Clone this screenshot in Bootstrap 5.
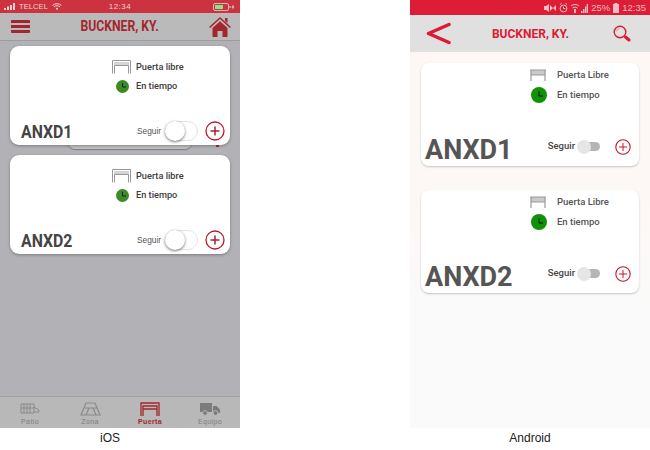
<!DOCTYPE html>
<html lang="en">

<head>
    <meta charset="UTF-8">
    <meta name="viewport" content="width=device-width, initial-scale=1.0">
    <title>Puerta</title>
    <link href="https://cdn.jsdelivr.net/npm/bootstrap@5.3.0/dist/css/bootstrap.min.css" rel="stylesheet">
    <style>
        body {
            width: 650px;
            height: 450px;
            overflow: hidden;
            background: #fff;
            font-family: "Liberation Sans", Arial, sans-serif;
        }

        .phone-col {
            width: 240px;
        }

        .phone {
            height: 428px;
        }

        .phone-ios {
            background: #b1b1b6;
        }

        .phone-android {
            background: linear-gradient(#fdf8f6, #fdf8f6 200px, #fafafa 320px);
        }

        .caption {
            height: 22px;
            font-size: 12px;
            line-height: 20px;
            color: #222;
        }

        .caption-ios {
            padding-right: 20px;
        }

        /* status bars */
        .status-ios {
            height: 13px;
            background: #cb333f;
            color: #ecd3d5;
            font-size: 7.5px;
            line-height: 13px;
            padding: 0 5px 0 4px;
            letter-spacing: .1px;
        }

        .status-android {
            height: 15px;
            background: #dd1d36;
            color: #f3bcc3;
            font-size: 9.5px;
            line-height: 15px;
            padding: 0 4px 0 0;
            gap: 3px;
        }

        .status-third {
            width: 33.33%;
        }

        .time-ios {
            font-size: 8px;
            letter-spacing: .5px;
            padding-left: 1px;
        }

        /* headers */
        .head-ios {
            height: 28px;
            background: #bababa;
            border-bottom: 1px solid #9d9d9f;
            padding: 0 9px 0 11px;
            color: #a3262f;
        }

        .head-android {
            height: 37px;
            background: #e0e0e0;
            padding: 0 19px 0 16px;
            color: #dc1a33;
        }

        .title-ios {
            font-family: "Roboto", sans-serif;
            font-weight: 700;
            font-size: 14.5px;
            transform: scaleX(.84);
        }

        .title-android {
            font-family: "Roboto", sans-serif;
            font-weight: 700;
            font-size: 12px;
            margin-left: -3px;
        }

        .burger {
            width: 19px;
            height: 13px;
            border-top: 3px solid #a3262f;
            border-bottom: 3px solid #a3262f;
            border-radius: 1px;
        }

        .burger::after {
            content: "";
            display: block;
            height: 3px;
            margin-top: 2px;
            background: #a3262f;
        }

        /* cards */
        .list-ios {
            padding: 5px 10px 0;
            gap: 10px;
            position: relative;
        }

        .list-android {
            padding: 11px 11px 0;
            gap: 24.500px;
        }

        .unit-card {
            background: #fff;
            position: relative;
            z-index: 1;
        }

        .unit-ios {
            height: 99px;
            border-radius: 9px;
            box-shadow: 0 1px 3px rgba(60, 60, 60, .45);
        }

        .unit-android {
            height: 102.500px;
            border-radius: 8px;
            box-shadow: 0 1px 2px rgba(0, 0, 0, .22);
        }

        .peek {
            position: absolute;
            top: 99px;
            left: 68px;
            width: 124px;
            height: 9px;
            background: #c0c0c2;
            border-radius: 0 0 7px 7px;
            box-shadow: 0 1px 1px rgba(60, 60, 60, .45);
        }

        .peek-dot {
            position: absolute;
            top: 104px;
            left: 216px;
            width: 3px;
            height: 2px;
            background: #a3262f;
        }

        .info-ios {
            padding: 13px 0 0 102px;
            gap: 3px;
        }

        .info-android {
            padding: 4px 0 0 109px;
            gap: 4px;
        }

        .info-row {
            height: 16px;
        }

        .info-ios .info-row {
            font-family: "Roboto", sans-serif;
            font-weight: 500;
            font-size: 9.200px;
            color: #3c3c3c;
        }

        .info-android .info-row {
            font-family: "Roboto", sans-serif;
            font-weight: 500;
            font-size: 9.500px;
            color: #555;
        }

        .icon-slot {
            width: 24px;
        }

        .icon-slot-a {
            width: 27px;
        }

        .foot-ios {
            position: absolute;
            left: 11px;
            right: 5px;
            bottom: 2px;
            height: 24px;
        }

        .foot-android {
            position: absolute;
            left: 4px;
            right: 8px;
            bottom: -1px;
            height: 34px;
        }

        .code-ios {
            font-family: "Roboto", sans-serif;
            font-weight: 700;
            font-size: 18px;
            color: #444;
            transform: scaleX(.88);
            transform-origin: left;
        }

        .code-android {
            font-family: "Roboto", sans-serif;
            font-weight: 700;
            font-size: 27px;
            line-height: 34px;
            color: #555;
        }

        .follow-ios {
            font-size: 8.300px;
            color: #555;
            margin-right: 4px;
        }

        .follow-android {
            font-family: "Roboto", sans-serif;
            font-weight: 500;
            font-size: 9.500px;
            color: #444;
        }

        .right-android {
            margin-bottom: 6px;
        }

        .toggle-ios {
            width: 33px;
            height: 20px;
            border: 1px solid #e2e2e2;
            border-radius: 10px;
            position: relative;
            margin-right: 7px;
        }

        .toggle-ios::before {
            content: "";
            position: absolute;
            left: -1px;
            top: -1px;
            width: 20px;
            height: 20px;
            border-radius: 50%;
            background: #fff;
            box-shadow: 0 1px 3px rgba(0, 0, 0, .55);
        }

        .toggle-android {
            width: 22px;
            height: 9px;
            border-radius: 5px;
            background: #b5b5b5;
            position: relative;
            margin: 0 15px 0 3px;
        }

        .toggle-android::before {
            content: "";
            position: absolute;
            left: -1px;
            top: -2.500px;
            width: 14px;
            height: 14px;
            border-radius: 50%;
            background: #e6e6e6;
        }

        /* tab bar */
        .tabbar {
            height: 32px;
            margin-top: auto;
            background: #b8b8b8;
            border-top: 1px solid #a2a2a4;
        }

        .tab-item {
            width: 60px;
            font-size: 7px;
            letter-spacing: .4px;
            color: #7f7f7f;
            line-height: 8px;
        }

        .tab-item.on {
            color: #a3262f;
            font-weight: 700;
        }

        .tab-item svg {
            display: block;
            margin: 5px auto 2px;
        }
    </style>
</head>

<body>
    <div class="d-flex justify-content-between">

        <!-- iOS -->
        <div class="phone-col">
            <div class="phone phone-ios d-flex flex-column">
                <div class="status-ios d-flex align-items-center">
                    <div class="status-third d-flex align-items-center">
                        <svg width="11" height="7" viewBox="0 0 11 7"><path fill="#e9d3d5" d="M0 5h2v2H0zM3 3.500h2V7H3zM6 2h2v5H6zM9 0h2v7H9z"/></svg>
                        <span class="ms-1 me-1">TELCEL</span>
                        <svg width="10" height="7" viewBox="0 0 10 7"><path fill="none" stroke="#e9d3d5" d="M.5 2.500a6.500 6.500 0 0 1 9 0M2 4a4.200 4.200 0 0 1 6 0"/><circle cx="5" cy="5.800" r="1" fill="#e9d3d5"/></svg>
                    </div>
                    <div class="status-third text-center time-ios">12:34</div>
                    <div class="status-third d-flex justify-content-end align-items-center">
                        <svg width="22" height="8" viewBox="0 0 22 8"><rect x=".5" y=".5" width="15" height="7" rx="1.500" fill="none" stroke="#e0b5b9"/><rect x="2" y="2" width="8" height="4" fill="#84e884"/><path fill="#e9d3d5" d="M16.500 3h1v2h-1zM20.500 1l-2 3.500h1.500l-.5 2.500 2-3.500H20z"/></svg>
                    </div>
                </div>
                <div class="head-ios d-flex align-items-center justify-content-between">
                    <div class="burger"></div>
                    <div class="title-ios">BUCKNER, KY.</div>
                    <svg width="22" height="22" viewBox="0 0 22 22"><path fill="none" stroke="#a3262f" stroke-width="1.600" d="M.6 11.500 11 2l10.400 9.500"/><path fill="#a3262f" d="M16 2h2.500v5L16 5zM3.500 12 11 5.200 18.500 12v9h-5v-6h-5v6h-5z"/></svg>
                </div>
                <div class="list-ios d-flex flex-column">
                    <div class="peek"></div>
                    <div class="peek-dot"></div>
                    <div class="unit-card unit-ios">
                        <div class="info-ios d-flex flex-column">
                            <div class="info-row d-flex align-items-center">
                                <div class="icon-slot"><svg class="d-block" width="19" height="14" viewBox="0 0 19 14"><path fill="#d5d5d5" d="M2 2h15v4H2z"/><path fill="none" stroke="#999" d="M.5 13.500V.5h18v13M2.500 13.500V5.500h14v8"/></svg></div>
                                Puerta libre
                            </div>
                            <div class="info-row d-flex align-items-center">
                                <div class="icon-slot"><svg class="d-block ms-1" width="13" height="13" viewBox="0 0 13 13"><circle cx="6.500" cy="6.500" r="6.500" fill="#3c8a23"/><path fill="none" stroke="#123" d="M6.500 3v4H10"/></svg></div>
                                En tiempo
                            </div>
                        </div>
                        <div class="foot-ios d-flex align-items-center">
                            <div class="code-ios me-auto">ANXD1</div>
                            <span class="follow-ios">Seguir</span>
                            <div class="toggle-ios"></div>
                            <svg width="20" height="20" viewBox="0 0 20 20"><circle cx="10" cy="10" r="9" fill="#fff" stroke="#bd1b2b" stroke-width="1.300"/><path stroke="#a3262f" stroke-width="1.500" d="M10 5.500v9M5.500 10h9"/></svg>
                        </div>
                    </div>
                    <div class="unit-card unit-ios">
                        <div class="info-ios d-flex flex-column">
                            <div class="info-row d-flex align-items-center">
                                <div class="icon-slot"><svg class="d-block" width="19" height="14" viewBox="0 0 19 14"><path fill="#d5d5d5" d="M2 2h15v4H2z"/><path fill="none" stroke="#999" d="M.5 13.500V.5h18v13M2.500 13.500V5.500h14v8"/></svg></div>
                                Puerta libre
                            </div>
                            <div class="info-row d-flex align-items-center">
                                <div class="icon-slot"><svg class="d-block ms-1" width="13" height="13" viewBox="0 0 13 13"><circle cx="6.500" cy="6.500" r="6.500" fill="#3c8a23"/><path fill="none" stroke="#123" d="M6.500 3v4H10"/></svg></div>
                                En tiempo
                            </div>
                        </div>
                        <div class="foot-ios d-flex align-items-center">
                            <div class="code-ios me-auto">ANXD2</div>
                            <span class="follow-ios">Seguir</span>
                            <div class="toggle-ios"></div>
                            <svg width="20" height="20" viewBox="0 0 20 20"><circle cx="10" cy="10" r="9" fill="#fff" stroke="#bd1b2b" stroke-width="1.300"/><path stroke="#a3262f" stroke-width="1.500" d="M10 5.500v9M5.500 10h9"/></svg>
                        </div>
                    </div>
                </div>
                <div class="tabbar d-flex text-center">
                    <div class="tab-item">
                        <svg width="20" height="14" viewBox="0 0 20 14"><path fill="none" stroke="#8a8a8a" d="M1 2h13v9H1zM4 2v9M7 2v9M10 2v9M14 5l5 3v2h-5M1 6h13"/></svg>
                        Patio
                    </div>
                    <div class="tab-item">
                        <svg width="21" height="14" viewBox="0 0 21 14"><path fill="none" stroke="#8a8a8a" stroke-width="1.200" d="M6 1h9l5 12H1zM5 6h12M9 6l-3 7M13 6l3 7"/></svg>
                        Zona
                    </div>
                    <div class="tab-item on">
                        <svg width="20" height="14" viewBox="0 0 20 14"><path fill="none" stroke="#a3262f" stroke-width="1.300" d="M1 14V1h18v13M3 14V4h14v10M3 7h14"/></svg>
                        Puerta
                    </div>
                    <div class="tab-item">
                        <svg width="20" height="14" viewBox="0 0 20 14"><path fill="#7b7b7b" d="M0 1h12v9H0zM13 4h3.500L20 7.500V11h-7z"/><circle cx="5" cy="11" r="2.400" fill="#7b7b7b" stroke="#b8b8b8"/><circle cx="15.500" cy="11" r="2.400" fill="#7b7b7b" stroke="#b8b8b8"/></svg>
                        Equipo
                    </div>
                </div>
            </div>
            <div class="caption caption-ios text-center">iOS</div>
        </div>

        <!-- Android -->
        <div class="phone-col">
            <div class="phone phone-android d-flex flex-column">
                <div class="status-android d-flex align-items-center justify-content-end">
                    <svg width="24" height="10" viewBox="0 0 24 10"><path fill="#f3bcc3" d="M0 3h2l3-2v8L2 7H0zM6 2l3 3 3-3v6L9 5 6 8z"/><circle cx="19.500" cy="5.500" r="3.400" fill="none" stroke="#f3bcc3"/><path stroke="#f3bcc3" d="M19.500 3.500v2h2M16 1.500l1.500-1M23 1.500l-1.500-1"/></svg>
                    <svg width="17" height="10" viewBox="0 0 17 10"><path fill="none" stroke="#f3bcc3" d="M0 3a6 6 0 0 1 8 0M1.500 5a4 4 0 0 1 5 0"/><path fill="#f3bcc3" d="M3 6h2v4H3zM10 8h1.500v2H10zM12 6h1.500v4H12zM14 3.500h1.300V10H14zM15.700 1H17v9h-1.300z"/></svg>
                    <span>25%</span>
                    <svg width="6" height="10" viewBox="0 0 6 10"><path fill="#f3bcc3" d="M1.500 0h3v1H6v9H0V1h1.500z"/></svg>
                    <span class="time-android">12:35</span>
                </div>
                <div class="head-android d-flex align-items-center justify-content-between">
                    <svg width="25" height="23" viewBox="0 0 25 23"><path fill="none" stroke="#dc1a33" stroke-width="3.500" stroke-linecap="round" stroke-linejoin="round" d="M23 2.500 2.500 11.500 23 20.500"/></svg>
                    <div class="title-android">BUCKNER, KY.</div>
                    <svg width="18" height="18" viewBox="0 0 18 18"><circle cx="7" cy="7" r="5.800" fill="none" stroke="#dc1a33" stroke-width="1.400"/><path fill="none" stroke="#e9919d" d="M3.500 6.500a3.500 3.500 0 0 1 3-3"/><path stroke="#dc1a33" stroke-width="3" stroke-linecap="round" d="m12.500 12 3.500 3"/></svg>
                </div>
                <div class="list-android d-flex flex-column">
                    <div class="unit-card unit-android">
                        <div class="info-android d-flex flex-column">
                            <div class="info-row d-flex align-items-center">
                                <div class="icon-slot-a"><svg class="d-block" width="16" height="12" viewBox="0 0 16 12"><path fill="#c9c9c9" d="M1 1h14v5H1z"/><path fill="none" stroke="#999" stroke-width="1.200" d="M1 12V1h14v11M0 1h16M1 6h14"/></svg></div>
                                Puerta Libre
                            </div>
                            <div class="info-row d-flex align-items-center">
                                <div class="icon-slot-a"><svg class="d-block" width="17" height="16" viewBox="0 0 17 16"><circle cx="9" cy="8" r="8" fill="#0f9108"/><path fill="none" stroke="#111" d="M9 4v5h4"/></svg></div>
                                En tiempo
                            </div>
                        </div>
                        <div class="foot-android d-flex align-items-center">
                            <div class="code-android me-auto">ANXD1</div>
                            <div class="right-android d-flex align-items-center">
                                <span class="follow-android">Seguir</span>
                                <div class="toggle-android"></div>
                                <svg width="16" height="16" viewBox="0 0 16 16"><circle cx="8" cy="8" r="7.200" fill="#fff" stroke="#c8122b" stroke-width="1.100"/><path stroke="#c8122b" d="M8 4v8M4 8h8"/></svg>
                            </div>
                        </div>
                    </div>
                    <div class="unit-card unit-android">
                        <div class="info-android d-flex flex-column">
                            <div class="info-row d-flex align-items-center">
                                <div class="icon-slot-a"><svg class="d-block" width="16" height="12" viewBox="0 0 16 12"><path fill="#c9c9c9" d="M1 1h14v5H1z"/><path fill="none" stroke="#999" stroke-width="1.200" d="M1 12V1h14v11M0 1h16M1 6h14"/></svg></div>
                                Puerta Libre
                            </div>
                            <div class="info-row d-flex align-items-center">
                                <div class="icon-slot-a"><svg class="d-block" width="17" height="16" viewBox="0 0 17 16"><circle cx="9" cy="8" r="8" fill="#0f9108"/><path fill="none" stroke="#111" d="M9 4v5h4"/></svg></div>
                                En tiempo
                            </div>
                        </div>
                        <div class="foot-android d-flex align-items-center">
                            <div class="code-android me-auto">ANXD2</div>
                            <div class="right-android d-flex align-items-center">
                                <span class="follow-android">Seguir</span>
                                <div class="toggle-android"></div>
                                <svg width="16" height="16" viewBox="0 0 16 16"><circle cx="8" cy="8" r="7.200" fill="#fff" stroke="#c8122b" stroke-width="1.100"/><path stroke="#c8122b" d="M8 4v8M4 8h8"/></svg>
                            </div>
                        </div>
                    </div>
                </div>
            </div>
            <div class="caption text-center">Android</div>
        </div>

    </div>

    <script src="https://cdn.jsdelivr.net/npm/bootstrap@5.3.0/dist/js/bootstrap.bundle.min.js"></script>
</body>

</html>
